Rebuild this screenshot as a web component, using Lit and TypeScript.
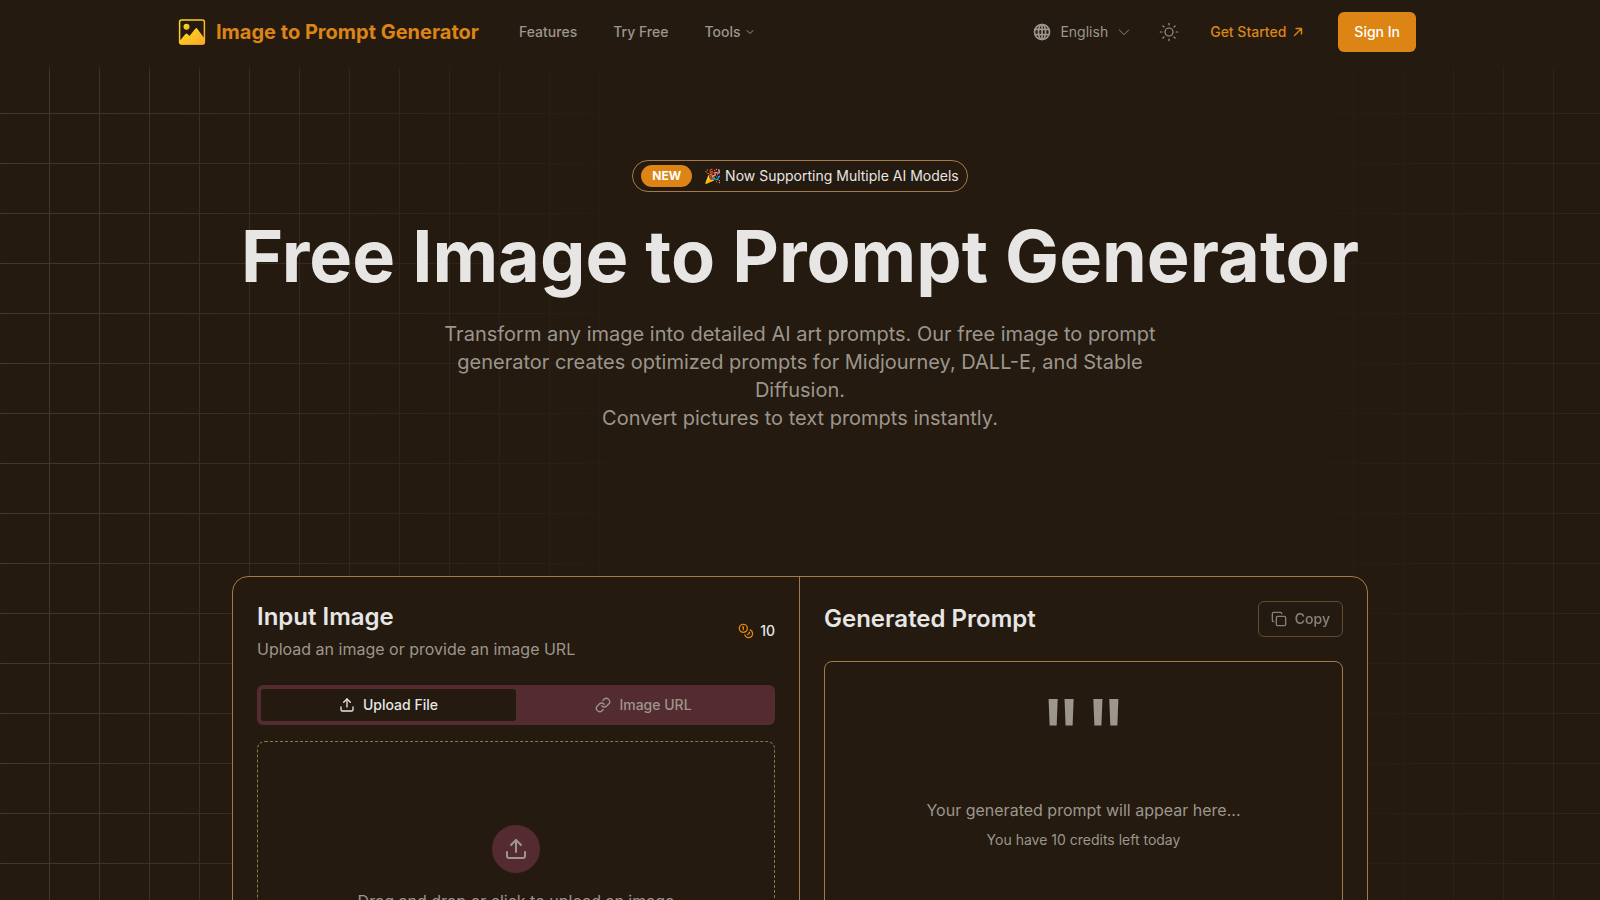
import { LitElement, html, css, svg } from "lit";
import { customElement, state } from "lit/decorators.js";

const icon = (body: unknown, cls = "", sw = 2) => html`<svg
  class="icon ${cls}" viewBox="0 0 24 24" fill="none" stroke="currentColor"
  stroke-width=${sw} stroke-linecap="round" stroke-linejoin="round" aria-hidden="true">${body}</svg>`;

const upload = svg`<path d="M12 3v12"/><path d="m17 8-5-5-5 5"/><path d="M21 15v4a2 2 0 0 1-2 2H5a2 2 0 0 1-2-2v-4"/>`;
const chevron = svg`<path d="m6 9 6 6 6-6"/>`;
const wideChevron = svg`<path d="m5 9 7 7 7-7"/>`;
const link = svg`<path d="M10 13a5 5 0 0 0 7.54.54l3-3a5 5 0 0 0-7.07-7.07l-1.72 1.71"/><path d="M14 11a5 5 0 0 0-7.54-.54l-3 3a5 5 0 0 0 7.07 7.07l1.71-1.71"/>`;
const copy = svg`<rect width="14" height="14" x="8" y="8" rx="2"/><path d="M4 16c-1.1 0-2-.9-2-2V4c0-1.1.9-2 2-2h10c1.1 0 2 .9 2 2"/>`;
const coins = svg`<circle cx="8" cy="8" r="6"/><path d="M18.09 10.37A6 6 0 1 1 10.34 18"/><path d="M7 6h1v4"/><path d="m16.71 13.88.7.71-2.82 2.82"/>`;
const globe = svg`<circle cx="12" cy="12" r="9"/><ellipse cx="12" cy="12" rx="4.3" ry="9"/><path d="M12 3v18M4 8.800h16M4 15.200h16"/>`;
const sun = svg`<circle cx="12" cy="12" r="4.8"/><path d="M12 1.500v2M12 20.500v2M1.500 12h2M20.500 12h2M4.600 4.600 6 6M18 18l1.400 1.400M4.600 19.400 6 18M18 6l1.400-1.400"/>`;
const arrow = svg`<path d="M5 19 19 5M8 5h11v11"/>`;

@customElement("app-root")
export class AppRoot extends LitElement {
  @state() private tab: "file" | "url" = "file";

  static styles = css`
    :host {
      --bg: #241a0f;
      --line: #a37a4b;
      --text: #e7e6e5;
      --muted: #9c968d;
      --accent: #dc8515;
      --plum: #542b31;
      display: block;
      height: 100vh;
      overflow: hidden;
      background: var(--bg);
      color: var(--text);
      font: 400 16px/24px Inter, "Liberation Sans", sans-serif;
    }
    * { box-sizing: border-box; }
    h1, h2, p { margin: 0; }
    a { color: inherit; text-decoration: none; }
    button { font: inherit; color: inherit; background: none; border: 0; padding: 0; cursor: pointer; }
    .icon { width: 16px; height: 16px; flex: none; }
    .tiny { width: 12px; height: 12px; }
    .mid { width: 20px; height: 20px; }
    .big { width: 24px; height: 24px; }

    .header { height: 64px; padding: 0 24px; background: var(--bg); }
    .bar {
      max-width: 1232px; height: 100%; margin: 0 auto;
      display: flex; align-items: center; justify-content: space-between;
      font-size: 14px; line-height: 20px; font-weight: 500; color: var(--muted);
    }
    .left, .right, .nav, .item { display: flex; align-items: center; }
    .left { gap: 40px; margin-left: -6px; }
    .nav { gap: 36px; }
    .item { gap: 4px; }
    .brand { display: flex; align-items: center; gap: 10px; font-size: 20px; line-height: 28px; font-weight: 700; color: var(--accent); }
    .logo { width: 28px; height: 28px; }
    .lang { gap: 8px; font-weight: 400; margin-right: 27px; }
    .start { gap: 6px; margin: 0 34px 0 31px; color: var(--accent); }
    .signin { height: 40px; padding: 0 16px; border-radius: 6px; background: var(--accent); color: #fff; }

    .page { position: relative; }
    .grid {
      position: absolute; inset: 0; height: 100vh; pointer-events: none;
      mask-image: linear-gradient(to bottom, transparent, #000 8px);
    }
    .grid::before, .grid::after {
      content: ""; position: absolute; inset: 0;
      background-image:
        linear-gradient(to right, transparent 49px, #80766a 49px),
        linear-gradient(to bottom, transparent 49px, #80766a 49px);
      background-size: 50px 50px;
    }
    .grid::before { mask-image: linear-gradient(to right, rgb(0 0 0 / 0.34), transparent 42%); }
    .grid::after {
      background-position: 4px 0;
      mask-image: linear-gradient(to right, transparent 78%, rgb(0 0 0 / 0.14));
    }
    .hero { position: relative; padding: 96px 24px 0; display: flex; flex-direction: column; align-items: center; text-align: center; }
    .pill {
      display: flex; align-items: center; gap: 12px; height: 32px; padding: 0 8px;
      border: 1px solid var(--line); border-radius: 16px; font-size: 14px; line-height: 20px;
    }
    .new { padding: 1px 11px; border-radius: 12px; background: var(--accent); color: #fff; font-size: 12px; font-weight: 700; }
    .title { margin-top: 28px; font-size: 72px; line-height: 72px; font-weight: 700; }
    .lead { max-width: 736px; margin-top: 28px; font-size: 20px; line-height: 28px; color: var(--muted); }

    .card {
      position: relative; max-width: 1136px; margin: 144px auto 0;
      display: grid; grid-template-columns: 1fr 1fr;
      border: 1px solid var(--line); border-radius: 16px; background: var(--bg);
    }
    .col { padding: 24px; min-width: 0; }
    .col:first-child { border-right: 1px solid var(--line); }
    .head { display: flex; align-items: center; justify-content: space-between; }
    .h { font-size: 24px; line-height: 32px; font-weight: 600; }
    .sub { color: var(--muted); margin-top: 4px; }
    .credits { display: flex; align-items: center; gap: 6px; font-size: 14px; line-height: 20px; font-weight: 500; }
    .credits .icon { color: var(--accent); }
    .tabs { display: grid; grid-template-columns: 1fr 1fr; height: 40px; margin-top: 24px; padding: 4px; border-radius: 6px; background: var(--plum); }
    .tab { display: flex; align-items: center; justify-content: center; gap: 8px; border-radius: 3px; font-size: 14px; line-height: 20px; font-weight: 500; color: var(--muted); }
    .tab.on { background: var(--bg); color: var(--text); }
    .drop {
      width: 100%; height: 300px; margin-top: 16px; padding-top: 83px;
      display: flex; flex-direction: column; align-items: center; gap: 16px;
      border: 1px dashed #8c7a45; border-radius: 8px; color: var(--muted);
    }
    .disc { display: grid; place-items: center; width: 48px; height: 48px; border-radius: 50%; background: var(--plum); }
    .copy { display: flex; align-items: center; gap: 8px; height: 36px; padding: 0 12px; border: 1px solid var(--line); border-radius: 6px; font-size: 14px; line-height: 20px; font-weight: 500; opacity: 0.5; color: var(--text); }
    .out {
      margin-top: 24px; height: 380px; padding-top: 24px; border: 1px solid var(--line); border-radius: 8px;
      display: flex; flex-direction: column; align-items: center; text-align: center; color: var(--muted);
    }
    .quote { font-size: 96px; line-height: 96px; }
    .wait { margin-top: 16px; }
    .left-today { margin-top: 8px; font-size: 14px; line-height: 20px; }
  `;

  render() {
    return html`
      <header class="header"><div class="bar">
        <div class="left">
          <a class="brand" href="#">
            <svg class="logo" viewBox="0 0 28 28" aria-hidden="true">
              <defs><linearGradient id="g" x1="0" y1="0" x2="1" y2="1"><stop offset="0" stop-color="#ffdc1c"/><stop offset="1" stop-color="#fba72b"/></linearGradient></defs>
              <rect x="1.600" y="2" width="24.800" height="24" rx="2" fill="none" stroke="url(#g)" stroke-width="1.500"/>
              <circle cx="8.500" cy="8.800" r="3" fill="url(#g)"/>
              <path d="M2 22.500l5.500-6.500q1-1 2 0l2 2 5.800-7.300q1-1.200 2 0L26.500 20.500V25a1.500 1.500 0 0 1-1.500 1.500H3.500A1.500 1.500 0 0 1 2 25z" fill="url(#g)"/>
            </svg>Image to Prompt Generator</a>
          <nav class="nav">
            <a href="#">Features</a><a href="#">Try Free</a>
            <button class="item">Tools ${icon(chevron, "tiny")}</button>
          </nav>
        </div>
        <div class="right">
          <button class="item lang">${icon(globe, "mid", 2)}English ${icon(wideChevron, "", 1.3)}</button>
          <button class="item" aria-label="Toggle theme">${icon(sun, "mid", 1.4)}</button>
          <a class="item start" href="#">Get Started ${icon(arrow, "tiny", 2.8)}</a>
          <button class="signin">Sign In</button>
        </div>
      </div></header>
      <main class="page">
        <div class="grid"></div>
        <section class="hero">
          <a class="pill" href="#"><span class="new">NEW</span><span>🎉 Now Supporting Multiple AI Models</span></a>
          <h1 class="title">Free Image to Prompt Generator</h1>
          <p class="lead">Transform any image into detailed AI art prompts. Our free image to prompt generator creates optimized prompts for Midjourney, DALL-E, and Stable Diffusion.<br />Convert pictures to text prompts instantly.</p>
        </section>
        <section class="card">
          <div class="col">
            <div class="head">
              <div><h2 class="h">Input Image</h2><p class="sub">Upload an image or provide an image URL</p></div>
              <span class="credits">${icon(coins)}10</span>
            </div>
            <div class="tabs" role="tablist">
              <button role="tab" class="tab ${this.tab === "file" ? "on" : ""}" aria-selected=${this.tab === "file"} @click=${() => (this.tab = "file")}>${icon(upload)}Upload File</button>
              <button role="tab" class="tab ${this.tab === "url" ? "on" : ""}" aria-selected=${this.tab === "url"} @click=${() => (this.tab = "url")}>${icon(link)}Image URL</button>
            </div>
            <button class="drop"><span class="disc">${icon(upload, "big")}</span><span>Drag and drop or click to upload an image</span></button>
          </div>
          <div class="col">
            <div class="head"><h2 class="h">Generated Prompt</h2><button class="copy">${icon(copy)}Copy</button></div>
            <div class="out">
              <div class="quote">""</div>
              <p class="wait">Your generated prompt will appear here...</p>
              <p class="left-today">You have 10 credits left today</p>
            </div>
          </div>
        </section>
      </main>`;
  }
}
